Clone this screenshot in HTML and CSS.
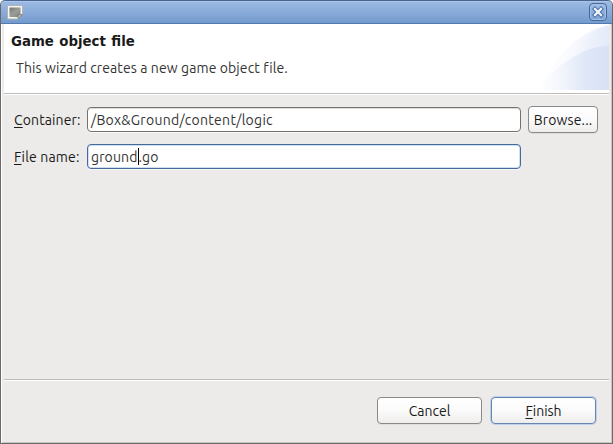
FILE: index.html
```html
<!DOCTYPE html>
<html lang="en">
<head>
<meta charset="utf-8">
<title>Game object file</title>
<link rel="stylesheet" href="styles.css">
</head>
<body>
<div class="window">
  <div class="titlebar">
    <svg class="app-icon" width="16" height="15" viewBox="0 0 16 15">
      <defs><linearGradient id="screen" x1="0" y1="0" x2="1" y2="1"><stop offset="0" stop-color="#747771"/><stop offset=".5" stop-color="#9b9e98"/><stop offset="1" stop-color="#7d807a"/></linearGradient></defs>
      <path d="M.5.5h15v9l-4.500 4.500H.5z" fill="#f4f4f0" stroke="#b3b4b0"/>
      <path d="M2.500 2.500h11v7l-2.500 2.500H2.500z" fill="url(#screen)"/>
      <path d="M11 13.500V10l4.500-.5z" fill="#c9cac6" stroke="#777" stroke-width=".8"/>
    </svg>
    <button class="close" aria-label="Close"><svg width="12" height="12" viewBox="0 0 12 12"><path d="M3 3l6 6M9 3l-6 6" stroke="#456a9d" stroke-width="4.200" stroke-linecap="square"/><path d="M3 3l6 6M9 3l-6 6" stroke="#f0f4fa" stroke-width="2.300" stroke-linecap="square"/></svg></button>
  </div>
  <div class="content">
    <header class="banner">
      <div class="copy">
        <h1>Game object file</h1>
        <p>This wizard creates a new game object file.</p>
      </div>
      <svg class="swoosh" width="75" height="66" viewBox="0 0 75 66">
        <defs>
          <linearGradient id="fade"><stop offset="0" stop-color="#fff"/><stop offset=".4" stop-color="#fafbfe"/><stop offset="1" stop-color="#e9eefa"/></linearGradient>
          <linearGradient id="fade2"><stop offset="0" stop-color="#d9e2f5" stop-opacity="0"/><stop offset=".3" stop-color="#d9e2f5" stop-opacity=".2"/><stop offset=".65" stop-color="#d9e2f5" stop-opacity=".65"/><stop offset="1" stop-color="#d9e2f5"/></linearGradient>
        </defs>
        <path d="M4 66C17 38 43 7 75 1V66z" fill="url(#fade)"/>
        <path d="M35 36C44 20 57 7 75 1V66H35z" fill="url(#fade2)" opacity=".3"/>
        <path d="M4 66C20 43 46 23 75 21.500V66z" fill="url(#fade2)"/>
      </svg>
    </header>
    <main class="form">
      <label for="container"><u>C</u>ontainer:</label>
      <div class="field" id="container"><span class="path">/Box&amp;Ground/content/logic</span></div>
      <button class="btn browse">Browse...</button>
      <label class="file-label" for="filename"><u>F</u>ile name:</label>
      <div class="field focused" id="filename"><span class="name">ground</span><i class="caret"></i><span class="name">.go</span></div>
    </main>
    <footer class="actions">
      <button class="btn">Cancel</button>
      <button class="btn default"><span><u>F</u>inish</span></button>
    </footer>
  </div>
</div>
</body>
</html>
```
FILE: styles.css
```css
* { box-sizing: border-box; }
body { margin: 0; background: #fff; font: 14px/20px "Ubuntu", "Noto Sans", sans-serif; color: #1a1a1a; }
.window { width: 613px; height: 444px; border: 1px solid #6b6866; border-top: 0; border-radius: 5px 5px 0 0; background: #edebe9; overflow: hidden; box-shadow: inset 1px 0 #fff, inset -1px -1px #c9c6c3; }
.titlebar { height: 24px; margin: 0 -1px; padding: 0 6px 0 7px; display: flex; justify-content: space-between; align-items: center; background: linear-gradient(#9dbbe5, #749bcd); border: 1px solid #4a6690; border-bottom-color: #5279b0; border-radius: 5px 5px 0 0; box-shadow: inset 0 1px #acc6ea; }
.app-icon { display: block; margin-left: -1px; }
.close { width: 18px; height: 18px; padding: 0; display: flex; align-items: center; justify-content: center; border: 1px solid #45699a; border-radius: 4px; background: linear-gradient(#a0bde5, #7fa3d4); box-shadow: inset 0 0 0 1px #a5c0e6; margin-right: -1px; }
.content { height: 419px; padding: 0 3px; display: flex; flex-direction: column; }
.banner { height: 71px; flex: none; display: flex; justify-content: space-between; background: #fff; border-bottom: 1px solid #fff; box-shadow: inset 0 -1px #bebcba; }
.copy { padding: 8px 0 0 7px; }
h1 { margin: 0; font: bold 13.333px/20px "DejaVu Sans", sans-serif; word-spacing: .8px; }
p { margin: 6px 0 0 5px; white-space: nowrap; color: #343434; letter-spacing: .1px; }
.form { flex: 1; display: grid; grid-template-columns: 66px 434px 70px; grid-template-rows: 27px 27px; row-gap: 10px; column-gap: 7px; padding: 11px 0 0 10px; align-items: center; align-content: start; }
label { white-space: nowrap; letter-spacing: .13px; }
.file-label { letter-spacing: .18px; }
.field { height: 25px; display: flex; align-items: center; padding-left: 3px; background: #fff; border: 1px solid #74716e; border-radius: 4px; color: #343434; box-shadow: 0 1px #f8f7f6, inset 0 1px #dedddc; }
.path { letter-spacing: .29px; }
.name { letter-spacing: .14px; }
.focused { border-color: #456a9b; box-shadow: inset 0 0 0 1px #cfdff2, 0 1px #f8f7f6; }
.caret { width: 1px; height: 17px; background: #000; }
.btn { height: 27px; padding: 0; border: 1px solid #8b8987; border-radius: 4px; background: linear-gradient(#fff, #fbfbfb 48%, #eeedec); font: inherit; color: #1a1a1a; box-shadow: 0 1px #e0dedb; white-space: nowrap; }
.browse { letter-spacing: .14px; }
u { text-decoration: underline; text-decoration-thickness: 1px; text-underline-offset: 2px; text-decoration-skip-ink: none; }
.actions { height: 64px; flex: none; display: flex; justify-content: flex-end; gap: 9px; padding: 17px 13px 0 0; border-top: 1px solid #bebcba; box-shadow: inset 0 1px #fff; }
.actions .btn { width: 105px; }
.default { border-color: #6586b1; box-shadow: 0 0 0 1px #bdd1eb; }
```
